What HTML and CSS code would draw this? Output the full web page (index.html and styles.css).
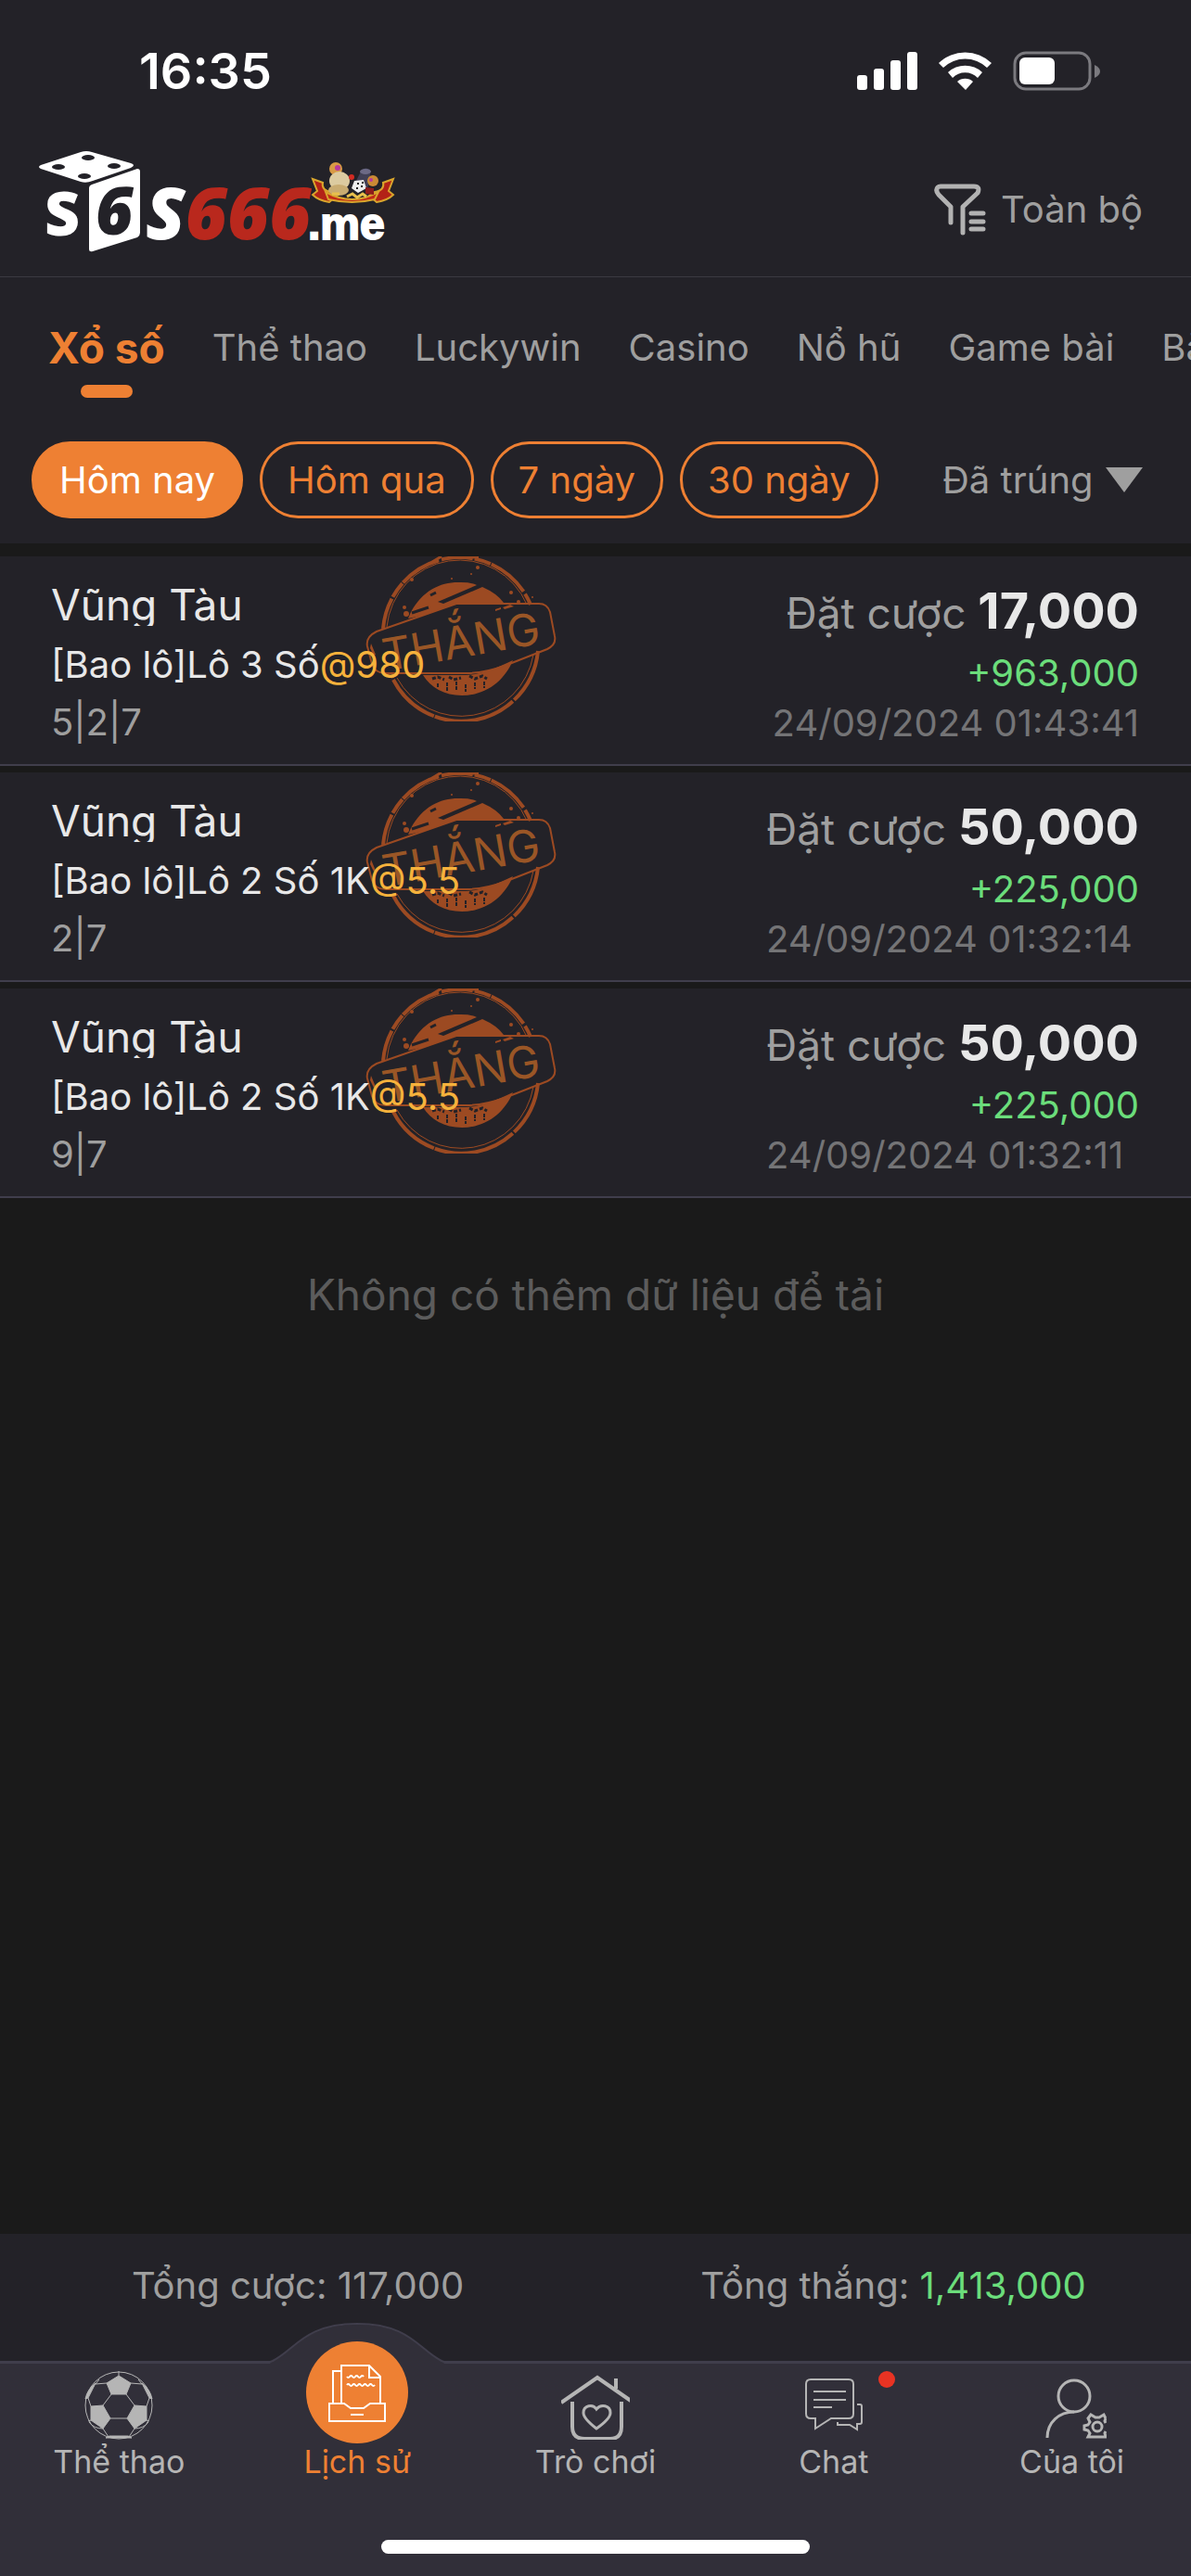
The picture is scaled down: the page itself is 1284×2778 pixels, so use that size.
FILE: index.html
```html
<!DOCTYPE html>
<html lang="vi">
<head>
    <meta charset="UTF-8">
    <meta name="viewport" content="width=device-width, initial-scale=1.0">
    <title>Lịch sử cược</title>
    <link rel="stylesheet" href="styles.css">
</head>
<body>
    <svg width="0" height="0" class="defs">
        <symbol id="stamp" viewBox="0 0 206 178">
            <g fill="none" stroke="#9c4a22">
                <path d="M19 78A83 84 0 0 1 178 52" stroke-width="4" stroke-dasharray="34 2 18 1 46 3"/>
                <path d="M23 76A79 80 0 0 1 174 52" stroke-width="1"/>
                <path d="M186 102A83 84 0 0 1 29 131" stroke-width="4" stroke-dasharray="60 2 90 1"/>
                <path d="M181 106A79 80 0 0 1 34 131" stroke-width="1"/>
                <path d="M72 6l10-6M96 1h26" stroke-width="3"/>
                <path d="M12 81L98 51H187Q196 51 199 60L204 86Q206 95 196 100L150 118Q128 126 108 126H22Q10 126 7 116L2 97Q0 87 12 81Z" stroke-width="2"/>
            </g>
            <path d="M49 60C62 36 82 27 103 28Q114 28 120 31L78 49L84 51L126 33Q142 40 149 50H100L60 64L46 67Z" fill="#9c4a22"/>
            <path d="M62 128H108Q126 128 159 112C150 134 130 150 104 150C85 150 70 141 62 128Z" fill="#9c4a22"/>
            <g stroke="#232228" stroke-width="3" fill="none">
                <path d="M50 61l18-6M70 42l6-3"/>
                <path d="M72 132l6-2 7 3M90 130l5 3 8-2M112 129l6 3 8-3 5 3" stroke-dasharray="4 2"/>
                <path d="M78 137v5M88 136v9M98 135v9M108 138v8M118 136v7M128 135v7" stroke-width="2" stroke-dasharray="4 1"/>
            </g>
            <g fill="#9c4a22">
                <circle cx="121" cy="12" r="2"/>
                <circle cx="114" cy="19" r="1"/>
                <circle cx="93" cy="24" r="1"/>
                <circle cx="50" cy="25" r="2"/>
                <circle cx="42" cy="55" r="2"/>
                <circle cx="44" cy="62" r="3"/>
                <circle cx="157" cy="39" r="2"/>
                <circle cx="165" cy="49" r="2"/>
                <circle cx="180" cy="44" r="1"/>
                <path d="M6 94l5 12-2 1-4-8zM140 57l6-2v2l-6 2zM148 55l8-3 4 2-10 3z"/>
            </g>
            <text x="103" y="109" text-anchor="middle" transform="rotate(-10 103 92)" class="stamp-text">THẮNG</text>
        </symbol>
    </svg>

    <div class="app">
        <div class="status-bar">
            <span class="time">16:35</span>
            <svg class="status-icons" width="264" height="44" viewBox="0 0 264 44" fill="#fff">
                <rect x="0" y="26" width="11" height="16" rx="3"/>
                <rect x="18" y="19" width="11" height="23" rx="3"/>
                <rect x="36" y="10" width="11" height="32" rx="3"/>
                <rect x="54" y="1" width="11" height="41" rx="3"/>
                <path d="M88 13a41 41 0 0 1 57 0l-5 5a34 34 0 0 0-47 0z"/>
                <path d="M98 23a27 27 0 0 1 37 0l-5 6a19 19 0 0 0-27 0z"/>
                <path d="M108 33a13 13 0 0 1 17 0l-8 9z"/>
                <rect x="170" y="2" width="81" height="39" rx="12" fill="none" stroke="#7b7a7f" stroke-width="3"/>
                <rect x="175" y="7" width="38" height="29" rx="6"/>
                <path d="M256 15q6 3 6 7t-6 7z" fill="#7b7a7f"/>
            </svg>
        </div>

        <header class="header">
            <svg class="logo" width="390" height="116" viewBox="0 0 390 116" role="img" aria-label="S666.me">
                <path d="M4 18L47 4Q53 2 59 4L101 16Q107 18 101 21L60 35Q53 38 47 36L4 22Q0 20 4 18Z" fill="#fff"/>
                <g fill="#232228">
                    <ellipse cx="55" cy="10" rx="7" ry="3"/>
                    <ellipse cx="23" cy="20" rx="7" ry="3"/>
                    <ellipse cx="83" cy="19" rx="7" ry="3"/>
                    <ellipse cx="51" cy="30" rx="7" ry="3"/>
                </g>
                <path d="M59 39L108 22Q111 22 111 25V91Q111 94 108 96L60 111Q56 112 56 109V43Q56 40 59 39Z" fill="#fff"/>
                <text x="8" y="94" class="logo-die-s">S</text>
                <text x="63" y="93" class="logo-die">6</text>
                <text x="117" y="98" class="logo-main"><tspan fill="#fff">S</tspan><tspan fill="#b9281d">666</tspan></text>
                <text x="292" y="98" class="logo-me">.me</text>
                <!-- casino badge over .me -->
                <path d="M297 33l11 4q-2 8 9 10l6 4-8 7q-12-2-18-8l5-4z" fill="#b32217" stroke="#d9a52c" stroke-width="2"/>
                <path d="M384 33l-11 4q2 8-9 10l-6 4 8 7q12-2 18-8l-5-4z" fill="#b32217" stroke="#d9a52c" stroke-width="2"/>
                <path d="M311 47q29 16 57 0l-4 8q-24 6-50 0z" fill="#c22a18" stroke="#d9a52c" stroke-width="2"/>
                <circle cx="322" cy="22" r="7" fill="#d89a45"/>
                <circle cx="324" cy="21" r="3" fill="#b9399a"/>
                <ellipse cx="326" cy="35" rx="11" ry="10" fill="#dccba0"/>
                <ellipse cx="325" cy="45" rx="11" ry="6" fill="#c9ac71"/>
                <path d="M349 25q4-6 10-2v8l-3 13-13-7z" fill="#424056"/>
                <ellipse cx="354" cy="25" rx="6" ry="3" fill="#6d6a86"/>
                <circle cx="339" cy="31" r="3" fill="#d22a22"/>
                <circle cx="362" cy="35" r="6" fill="#cb8a35"/>
                <circle cx="360" cy="34" r="2" fill="#b9399a"/>
                <path d="M342 35l10-1 3 9-9 5-7-5z" fill="#eee"/>
                <path d="M345 38h2M349 41h2M344 43h2M350 37h2" stroke="#222" stroke-width="2"/>
                <path d="M318 49h8M334 52l6-3 5 4 6-4 4 3" stroke="#e8c04d" stroke-width="3" fill="none"/>
                <path d="M354 42l9 1v7l-9-1z" fill="#8e1c1c"/>
            </svg>
            <button class="filter-btn" type="button">
                <svg width="56" height="56" viewBox="0 0 56 56" fill="none" stroke="#b2b2b2" stroke-width="5" stroke-linecap="round" stroke-linejoin="round">
                    <path d="M18 42V25L5 12Q1 7 4 4Q5 3 7 3H43Q50 3 47 10L31 25V53"/>
                    <path d="M40 32H53M40 41H53M40 49H53"/>
                </svg>
                Toàn bộ
            </button>
        </header>

        <nav class="tabs">
            <a href="#" class="tab active">Xổ số</a>
            <a href="#" class="tab">Thể thao</a>
            <a href="#" class="tab">Luckywin</a>
            <a href="#" class="tab">Casino</a>
            <a href="#" class="tab">Nổ hũ</a>
            <a href="#" class="tab">Game bài</a>
            <a href="#" class="tab">Bắn cá</a>
        </nav>

        <div class="filters">
            <button class="pill active" type="button">Hôm nay</button>
            <button class="pill" type="button">Hôm qua</button>
            <button class="pill" type="button">7 ngày</button>
            <button class="pill" type="button">30 ngày</button>
            <label class="status-select">
                <select aria-label="Trạng thái">
                    <option>Đã trúng</option>
                </select>
            </label>
        </div>

        <main class="bets">
            <article class="bet">
                <svg class="stamp"><use href="#stamp"/></svg>
                <div class="bet-info">
                    <h2>Vũng Tàu</h2>
                    <p class="bet-type">[Bao lô]Lô 3 Số<span class="odds">@980</span></p>
                    <p class="numbers">5|2|7</p>
                </div>
                <div class="bet-result">
                    <p class="stake">Đặt cược <strong>17,000</strong></p>
                    <p class="win">+963,000</p>
                    <p class="date">24/09/2024 01:43:41</p>
                </div>
            </article>
            <article class="bet">
                <svg class="stamp"><use href="#stamp"/></svg>
                <div class="bet-info">
                    <h2>Vũng Tàu</h2>
                    <p class="bet-type">[Bao lô]Lô 2 Số 1K<span class="odds">@5.5</span></p>
                    <p class="numbers">2|7</p>
                </div>
                <div class="bet-result">
                    <p class="stake">Đặt cược <strong>50,000</strong></p>
                    <p class="win">+225,000</p>
                    <p class="date">24/09/2024 01:32:14</p>
                </div>
            </article>
            <article class="bet">
                <svg class="stamp"><use href="#stamp"/></svg>
                <div class="bet-info">
                    <h2>Vũng Tàu</h2>
                    <p class="bet-type">[Bao lô]Lô 2 Số 1K<span class="odds">@5.5</span></p>
                    <p class="numbers">9|7</p>
                </div>
                <div class="bet-result">
                    <p class="stake">Đặt cược <strong>50,000</strong></p>
                    <p class="win">+225,000</p>
                    <p class="date">24/09/2024 01:32:11</p>
                </div>
            </article>
            <p class="no-more">Không có thêm dữ liệu để tải</p>
        </main>

        <div class="totals">
            <p>Tổng cược: 117,000</p>
            <p>Tổng thắng: <span class="total-win">1,413,000</span></p>
        </div>

        <footer class="bottom">
            <nav class="bottom-nav">
                <a href="#" class="nav-item">
                    <svg width="74" height="74" viewBox="0 0 74 74" fill="none" stroke="#b5b5b5" stroke-width="1">
                        <circle cx="37" cy="37" r="36"/>
                        <g fill="#b5b5b5">
                            <path d="M37 5L50 13L45 25H29L24 13Z"/>
                            <path d="M7 38L20 37L28 51L20 62L7 53Z"/>
                            <path d="M67 38L54 37L46 51L54 62L67 53Z"/>
                            <path d="M12 13L4 29L1 30Q3 20 12 13ZM62 13L70 29L73 30Q71 20 62 13ZM27 70H47L51 72H23Z"/>
                        </g>
                        <path d="M37 0V5M24 13L12 14L16 9M50 13L62 14L58 9M29 25L20 37M45 25L54 37M28 51H46M7 38L4 29M67 38L70 29M20 62L26 71M54 62L48 71M7 53L4 54M67 53L70 54M20 62Q10 62 5 55M54 62Q64 62 69 55"/>
                    </svg>
                    <span>Thể thao</span>
                </a>
                <a href="#" class="nav-item active">
                    <svg class="bump" width="188" height="44" viewBox="0 0 188 44">
                        <path d="M0 44L2 42C28 28 38 2 94 2S160 28 186 42L188 44Z" fill="#312f39"/>
                        <path d="M0 42L3 41C28 28 38 1 94 1S160 28 185 41L188 42" fill="none" stroke="#403e4c" stroke-width="2"/>
                    </svg>
                    <svg class="history-icon" width="110" height="110" viewBox="0 0 110 110" fill="none" stroke="#fff" stroke-width="2">
                        <circle cx="55" cy="55" r="55" fill="#ee8033" stroke="none"/>
                        <path d="M38 67V26H68L80 38V67M68 26V39H80M38 32H29V67"/>
                        <path d="M25 67H41L48 72H62L69 67H85V86H25ZM48 79H62"/>
                        <path d="M44 38q1.5 2 3 0t3 0t3 0t3 0t3 0t3 0M44 47q1.5-2 3 0t3 0t3 0t3 0t3 0t3 0t3 0t3 0t3 0t3 0"/>
                    </svg>
                    <span>Lịch sử</span>
                </a>
                <a href="#" class="nav-item">
                    <svg width="74" height="74" viewBox="0 0 74 74" fill="none" stroke="#b5b5b5" stroke-width="4">
                        <path d="M0 34L39 7L75 32M59 8V19M12 33V60Q12 73 25 73H53Q65 73 65 60V33"/>
                        <path d="M38 62C29 55 24 50 24 45C24 37 34 35 38 41C43 35 53 37 53 45C53 50 48 55 38 62Z" stroke-width="3"/>
                    </svg>
                    <span>Trò chơi</span>
                </a>
                <a href="#" class="nav-item">
                    <svg width="74" height="74" viewBox="0 0 74 74" fill="none" stroke="#b5b5b5" stroke-width="2">
                        <path d="M17 51H12Q7 51 7 46V14Q7 9 12 9H53Q58 9 58 14V46Q58 51 53 51H34L17 62Z"/>
                        <path d="M15 22H50M15 31H50M15 39H35"/>
                        <path d="M62 36H65Q67 36 67 38V55Q67 57 65 57H62V63L54 58H41V55"/>
                    </svg>
                    <span>Chat</span>
                    <i class="dot"></i>
                </a>
                <a href="#" class="nav-item">
                    <svg width="74" height="74" viewBox="0 0 74 74" fill="none" stroke="#b5b5b5" stroke-width="3">
                        <circle cx="39" cy="27" r="17"/>
                        <path d="M10 72C10 55 23 44 39 44"/>
                        <circle cx="64" cy="60" r="5"/>
                        <path d="M73 51L71 47L66 50H62L57 47L54 51L56 55L54 58L50 59V63L54 64L56 67L54 71H73L72 67L73 65M73 56L72 54L73 51"/>
                    </svg>
                    <span>Của tôi</span>
                </a>
            </nav>
            <div class="home-indicator"></div>
        </footer>
    </div>
</body>
</html>
```
FILE: styles.css
```css
* {
    box-sizing: border-box;
}

body {
    font-family: Inter, 'Noto Sans', sans-serif;
    font-size: 40px;
    line-height: 56px;
    margin: 0;
    background-color: #1a1a1a;
    color: #9f9f9f;
    overflow-x: hidden;
}

h2, p {
    margin: 0;
    font-weight: 400;
}

a {
    color: inherit;
    text-decoration: none;
}

button, select {
    font: inherit;
    color: inherit;
    background: none;
    border: none;
    padding: 0;
    cursor: pointer;
}

svg {
    display: block;
    flex-shrink: 0;
}

.defs {
    position: absolute;
}

.app {
    display: flex;
    flex-direction: column;
    min-height: 100vh;
}

/* top */
.status-bar {
    display: flex;
    align-items: center;
    justify-content: space-between;
    height: 154px;
    padding: 0 96px 0 150px;
    background-color: #232228;
}

.time {
    color: #fff;
    font-size: 54px;
    line-height: 72px;
    font-weight: 600;
}

.header {
    display: flex;
    align-items: center;
    justify-content: space-between;
    height: 145px;
    padding: 0 52px 0 40px;
    background-color: #232228;
    border-bottom: 1px solid #3b3a42;
}

.logo {
    margin-bottom: 16px;
}

.logo text {
    font-family: 'Open Sans', 'Noto Sans', sans-serif;
    font-weight: 800;
}

.logo-die-s {
    font-size: 66px;
    fill: #fff;
}

.logo-die {
    font-size: 70px;
    font-style: italic;
    fill: #232228;
}

.logo-main {
    font-size: 78px;
    font-style: italic;
}

.logo .logo-me {
    font-family: 'Liberation Sans', sans-serif;
    font-size: 48px;
    fill: #fff;
    stroke: #fff;
    stroke-width: 2px;
}

.filter-btn {
    display: flex;
    align-items: center;
    gap: 16px;
}

.tabs {
    display: flex;
    gap: 51px;
    padding: 48px 0 47px 52px;
    background-color: #232228;
    overflow: hidden;
    white-space: nowrap;
}

.tab {
    flex-shrink: 0;
}

.tab.active {
    position: relative;
    color: #ee8033;
    font-size: 46px;
    font-weight: 700;
}

.tab.active::after {
    content: '';
    position: absolute;
    top: 68px;
    left: 50%;
    width: 56px;
    height: 14px;
    margin-left: -28px;
    border-radius: 7px;
    background-color: #ee8033;
}

.filters {
    display: flex;
    align-items: center;
    gap: 18px;
    padding: 26px 52px 27px 34px;
    background-color: #232228;
}

.pill {
    height: 83px;
    padding: 0 27px;
    border: 3px solid #ee8033;
    border-radius: 42px;
    color: #ee8033;
    white-space: nowrap;
}

.pill.active {
    background-color: #ee8033;
    color: #fff;
}

.status-select {
    display: flex;
    align-items: center;
    gap: 13px;
    margin-left: auto;
}

.status-select select {
    appearance: none;
}

.status-select::after {
    content: '';
    border: 20px solid transparent;
    border-top: 27px solid #9f9f9f;
    border-bottom: none;
}

/* bet list */
.bets {
    flex: 1;
    padding-top: 14px;
}

.bet {
    position: relative;
    display: flex;
    justify-content: space-between;
    height: 226px;
    margin-bottom: 7px;
    padding: 26px 56px 0 55px;
    background-color: #232228;
    border-bottom: 2px solid #403e4c;
}

.stamp {
    position: absolute;
    top: 0;
    left: 394px;
    width: 206px;
    height: 178px;
}

.stamp-text {
    font-size: 48px;
    fill: #9a5626;
}

.bet-info {
    position: relative;
    padding-top: 3px;
}

.bet h2 {
    height: 46px;
    overflow: hidden;
    color: #e8e8e8;
    font-size: 46px;
    line-height: 46px;
}

.bet-type {
    margin-top: 14px;
    color: #e8e8e8;
}

.odds {
    color: #f6b23c;
}

.numbers {
    margin-top: 6px;
}

.bet-result {
    text-align: right;
}

.stake {
    font-size: 46px;
    line-height: 66px;
}

.stake strong {
    color: #e8e8e8;
    font-size: 54px;
    font-weight: 700;
}

.win {
    margin-top: 4px;
    color: #6bdd7b;
}

.date {
    color: #747476;
    text-align: left;
    line-height: 52px;
}

.no-more {
    padding-top: 69px;
    color: #5c5c5c;
    font-size: 46px;
    text-align: center;
}

/* bottom */
.totals {
    display: flex;
    height: 137px;
    padding-top: 28px;
    background-color: #232228;
}

.totals p {
    flex: 1;
    text-align: center;
}

.total-win {
    color: #6bdd7b;
}

.bottom {
    background-color: #312f39;
    border-top: 3px solid #403e4c;
    padding-bottom: 24px;
}

.bottom-nav {
    display: grid;
    grid-template-columns: repeat(5, 1fr);
    padding-bottom: 60px;
}

.nav-item {
    position: relative;
    display: flex;
    flex-direction: column;
    align-items: center;
    padding-top: 8px;
    color: #b5b5b5;
    font-size: 34px;
    line-height: 48px;
}

.nav-item.active {
    color: #ee8033;
}

.nav-item span {
    position: relative;
}

.bump {
    position: absolute;
    top: -44px;
    left: 50%;
    margin-left: -94px;
}

.history-icon {
    position: relative;
    margin: -32px 0 -4px;
}

.dot {
    position: absolute;
    top: 8px;
    left: 50%;
    width: 18px;
    height: 18px;
    margin-left: 48px;
    border-radius: 50%;
    background-color: #e93323;
}

.home-indicator {
    width: 36%;
    height: 15px;
    margin: 0 auto;
    border-radius: 8px;
    background-color: #fff;
}
```
